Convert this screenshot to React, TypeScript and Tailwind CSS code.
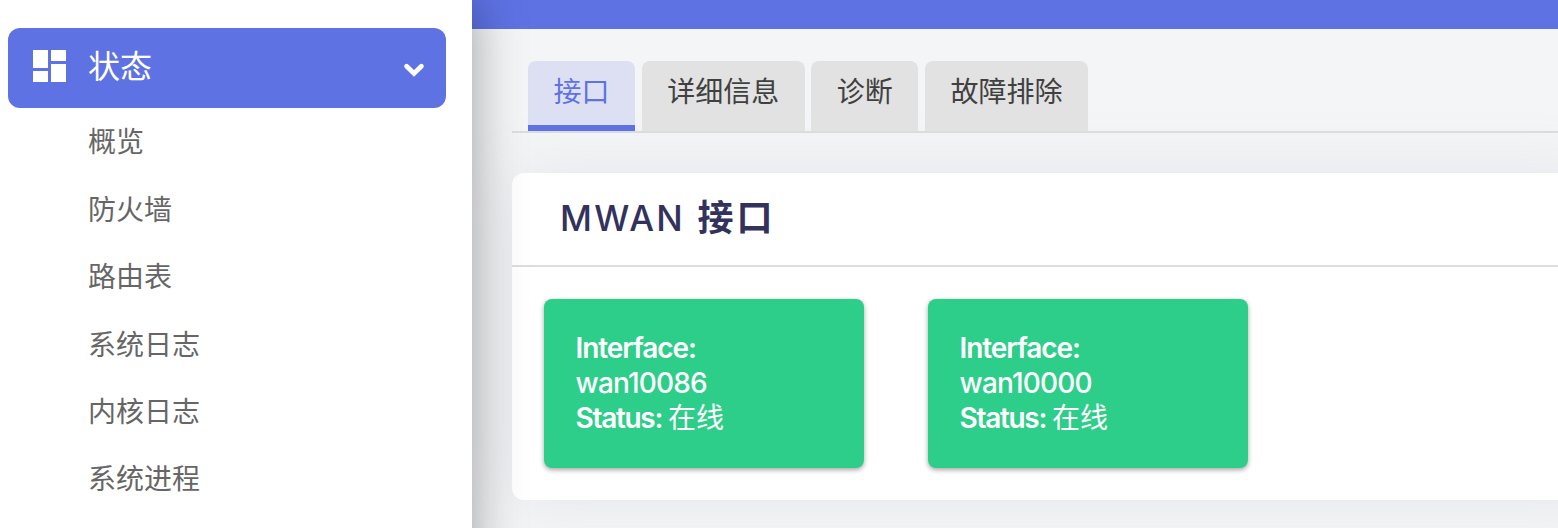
const menuItems = ['概览', '防火墙', '路由表', '系统日志', '内核日志', '系统进程'];
const tabs = ['接口', '详细信息', '诊断', '故障排除'];
const interfaces = ['wan10086', 'wan10000'];

function DashboardIcon() {
  return (
    <svg className="mb-1 h-8 w-[33px]" viewBox="0 0 33 32" fill="currentColor" aria-hidden="true">
      <path d="M0 0h15v18H0zM18 0h15v11H18zM0 21h15v11H0zM18 14h15v18H18z" />
    </svg>
  );
}

function Chevron() {
  return (
    <svg className="mt-1 h-4 w-[22px]" viewBox="0 0 22 16" fill="none" stroke="currentColor" strokeWidth="4.8" strokeLinecap="round" strokeLinejoin="miter" aria-hidden="true">
      <path d="M3.6 4.2L11 11.5L18.4 4.2" />
    </svg>
  );
}

function Sidebar() {
  return (
    <aside className="relative z-10 h-[700px] w-[472px] shrink-0 bg-white pt-7 pl-2 shadow-[0_0_48px_rgba(0,0,0,0.36)]">
      <button className="flex h-20 w-[438px] items-center rounded-[12px] bg-[#5e72e4] pr-[21px] pl-[25px] text-white">
        <DashboardIcon />
        <span className="mb-0.5 ml-[22px] text-[32px] leading-10">状态</span>
        <span className="ml-auto"><Chevron /></span>
      </button>
      <ul className="pt-[0.7px]">
        {menuItems.map((item) => (
          <li key={item} className="flex h-[67.4px] items-center pl-20 text-[28px] text-[#666666]">{item}</li>
        ))}
      </ul>
    </aside>
  );
}

function InterfaceCard({ name }: { name: string }) {
  return (
    <div className="h-[169px] w-80 rounded-[8px] bg-[#2dce89] pr-8 pt-8 pl-[31.5px] text-[28px] leading-[35px] text-white shadow-[0_2px_5px_rgba(0,0,0,0.35)]">
      <div className="font-semibold tracking-[-1.05px]">Interface:</div>
      <div className="font-medium tracking-[-0.8px]">{name}</div>
      <div><span className="font-semibold tracking-[-1.3px]">Status:</span><span className="-ml-0.5"> 在线</span></div>
    </div>
  );
}

export default function App() {
  return (
    <div className="flex h-[528px] overflow-hidden bg-[#f4f5f7] font-['Inter','Noto_Sans_CJK_SC',sans-serif]">
      <Sidebar />
      <main className="min-w-0 flex-1">
        <header className="h-[29px] bg-[#5e72e4]" />
        <div className="pt-8 pl-10">
          <nav className="flex h-[72px] gap-[6.4px] border-b-2 border-[#dddddd] pl-4 text-[28px] text-[#404040]">
            {tabs.map((tab, index) => (
              <div
                key={tab}
                className={index === 0
                  ? 'h-[70px] rounded-t-[8px] border-b-[6px] border-[#5e72e4] bg-[#dde0f3] px-[25.6px] leading-[62px] text-[#5e72e4]'
                  : 'h-[70px] rounded-t-[8px] bg-[#e2e2e2] px-[25.6px] leading-[62px]'}
              >
                {tab}
              </div>
            ))}
          </nav>
          <section className="mt-10 -mr-10 h-[327px] rounded-[12px] bg-white shadow-[0_0_64px_rgba(136,152,170,0.15)]">
            <h3 className="h-[94px] border-b-2 border-[#dddddd] pl-12 text-[36px] leading-[91px] font-bold tracking-[3px] text-[#32325d]">
              <span className="mr-px text-[35px] font-medium tracking-[2.2px]">MWAN</span> 接口
            </h3>
            <div className="flex gap-16 pt-8 pl-8">
              {interfaces.map((name) => <InterfaceCard key={name} name={name} />)}
            </div>
          </section>
        </div>
      </main>
    </div>
  );
}
